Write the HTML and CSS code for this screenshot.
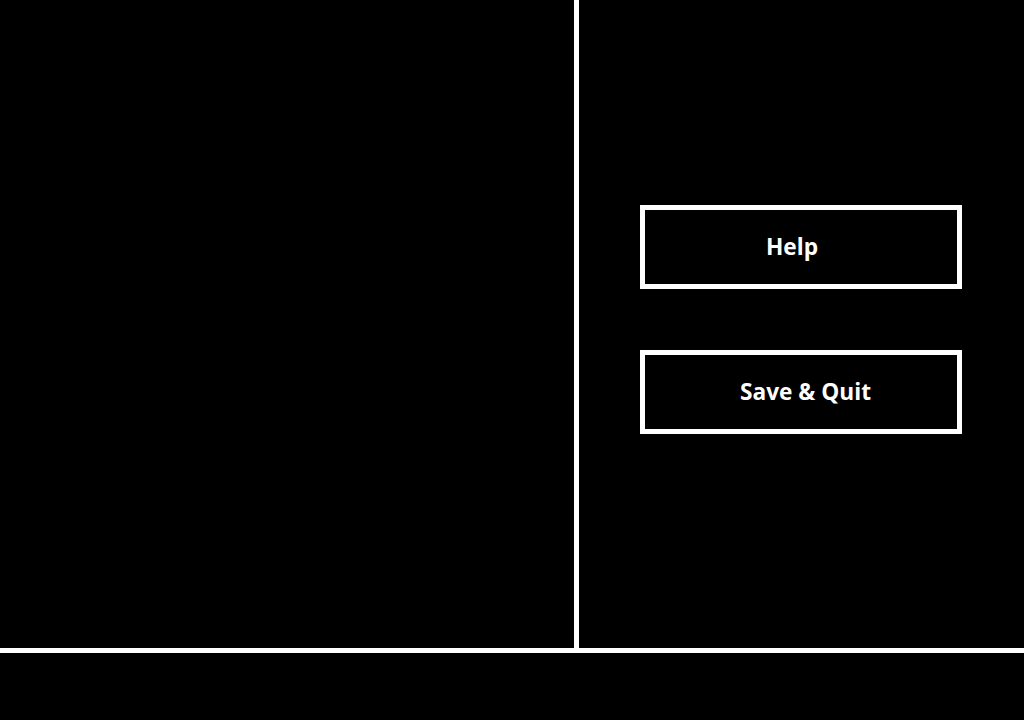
FILE: index.html
```html
<!DOCTYPE html>
<html lang="en">
<head>
<meta charset="utf-8">
<title>Menu</title>
<link rel="stylesheet" href="styles.css">
</head>
<body>
<div class="screen">
  <div class="top">
    <div class="left-panel"></div>
    <div class="divider-v"></div>
    <div class="right-panel">
      <div class="btn btn-help">Help</div>
      <div class="btn btn-save">Save &amp; Quit</div>
    </div>
  </div>
  <div class="divider-h"></div>
  <div class="bottom"></div>
</div>
</body>
</html>
```
FILE: styles.css
```css
html, body {
  margin: 0;
  padding: 0;
  background: #000;
}
.screen {
  width: 1024px;
  height: 720px;
  display: flex;
  flex-direction: column;
  background: #000;
  font-family: "Open Sans", "Noto Sans", sans-serif;
  color: #fff;
}
.top {
  height: 648px;
  display: flex;
}
.left-panel {
  width: 574px;
}
.divider-v {
  width: 5px;
  background: #fff;
}
.right-panel {
  flex: 1;
  display: flex;
  flex-direction: column;
  align-items: flex-start;
  padding: 205px 0 0 61px;
  gap: 61px;
}
.btn {
  box-sizing: border-box;
  width: 322px;
  height: 84px;
  border: 5px solid #fff;
  display: flex;
  align-items: center;
  justify-content: center;
  padding-bottom: 2px;
  font-size: 22.7px;
  font-weight: 700;
  letter-spacing: 0;
}
.btn-help {
  padding-right: 18px;
}
.btn-save {
  padding-left: 9px;
}
.divider-h {
  height: 5px;
  background: #fff;
}
.bottom {
  flex: 1;
}
```
